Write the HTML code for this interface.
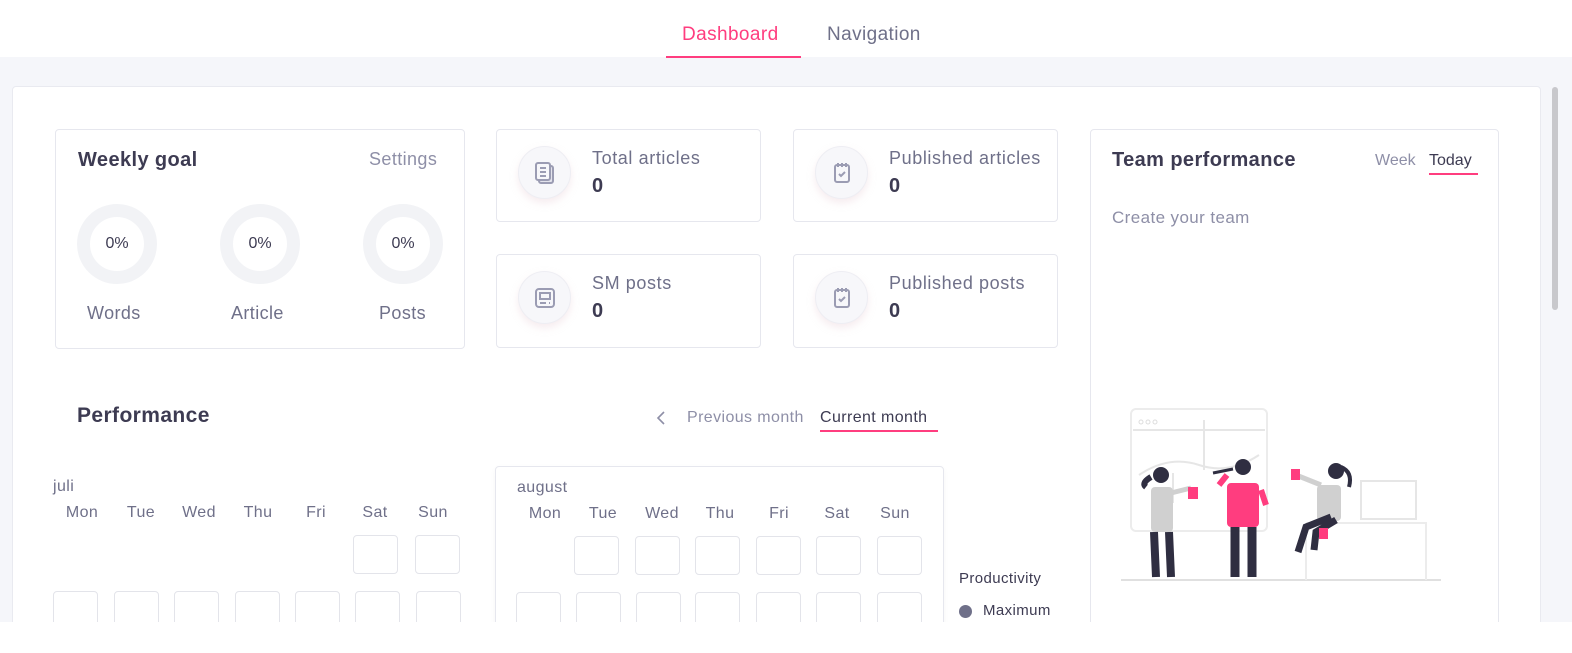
<!DOCTYPE html>
<html style="overflow:hidden"><head><meta charset="utf-8"><style>
*{box-sizing:border-box;margin:0;padding:0}
html,body{overflow:hidden}
body{width:1572px;height:653px;background:#fff;font-family:"Liberation Sans",sans-serif;position:relative;color:#3d3b52;letter-spacing:0.4px}
.abs{position:absolute}
.bg{left:0;top:57px;width:1572px;height:565px;background:#f5f6fa}
.main{left:12px;top:86px;width:1529px;height:560px;background:#fff;border:1px solid #e9eaf0;border-radius:4px}
.card{position:absolute;background:#fff;border:1px solid #e6e7ee;border-radius:4px}
.grey{color:#8e8fa7}
.donut{position:absolute;width:80px;height:80px;border-radius:50%;border:13px solid #f2f3f6;display:flex;align-items:center;justify-content:center;font-size:16px;color:#3d3b52;letter-spacing:0}
.ic{position:absolute;left:21px;top:16px;width:53px;height:53px;border-radius:50%;background:#f7f7fa;border:1px solid #eeeef3;box-shadow:0 4px 8px rgba(230,200,210,.35);display:flex;align-items:center;justify-content:center}
.lab{position:absolute;left:95px;top:18px;font-size:18px;color:#6f7089;letter-spacing:0.6px}
.num{position:absolute;left:95px;top:45px;font-size:20px;font-weight:bold;color:#3d3b52}
.dh{position:absolute;font-size:16px;color:#6f7089;transform:translateX(-50%)}
.bx{position:absolute;width:45px;height:39px;border:1px solid #e3e4ea;border-radius:4px}
</style></head><body>
<div class="abs" style="left:682px;top:24px;font-size:19px;color:#ff3d7f">Dashboard</div>
<div class="abs" style="left:827px;top:24px;font-size:19px;color:#6f7089">Navigation</div>
<div class="abs bg"></div>
<div class="abs" style="left:666px;top:56px;width:135px;height:2px;background:#ff3d7f"></div>
<div class="abs main"></div>
<div class="abs" style="left:1552px;top:87px;width:6px;height:223px;background:#c8c8cc;border-radius:3px"></div>

<div class="card" style="left:55px;top:129px;width:410px;height:220px">
 <div class="abs" style="left:22px;top:19px;font-size:20px;font-weight:bold">Weekly goal</div>
 <div class="abs grey" style="left:313px;top:19px;font-size:18px">Settings</div>
 <div class="donut" style="left:21px;top:74px">0%</div>
 <div class="donut" style="left:164px;top:74px">0%</div>
 <div class="donut" style="left:307px;top:74px">0%</div>
 <div class="abs" style="left:31px;top:173px;font-size:18px;color:#6f7089">Words</div>
 <div class="abs" style="left:175px;top:173px;font-size:18px;color:#6f7089">Article</div>
 <div class="abs" style="left:323px;top:173px;font-size:18px;color:#6f7089">Posts</div>
</div>

<div class="card" style="left:496px;top:129px;width:265px;height:93px"><div class="ic"><svg width="22" height="24" viewBox="0 0 22 24" fill="none" stroke="#9b9cb3" stroke-width="2"><rect x="5" y="5" width="14" height="17" rx="2" fill="#e3e3ec"/><rect x="2" y="2" width="14" height="17" rx="2" fill="#f7f7fa"/><path d="M6 7h6M6 11h6M6 15h6"/></svg></div><div class="lab">Total articles</div><div class="num">0</div></div>
<div class="card" style="left:793px;top:129px;width:265px;height:93px"><div class="ic"><svg width="20" height="24" viewBox="0 0 20 24" fill="none" stroke="#9b9cb3" stroke-width="2"><rect x="3" y="4" width="14" height="17" rx="2"/><path d="M6 2v4M10 2v4M14 2v4M7 13l2 2 4-4"/></svg></div><div class="lab">Published articles</div><div class="num">0</div></div>
<div class="card" style="left:496px;top:254px;width:265px;height:94px"><div class="ic"><svg width="22" height="22" viewBox="0 0 22 22" fill="none" stroke="#9b9cb3" stroke-width="2"><rect x="2" y="2" width="18" height="18" rx="3"/><rect x="6" y="6" width="10" height="6"/><path d="M6 16h6M15 16h1"/></svg></div><div class="lab">SM posts</div><div class="num">0</div></div>
<div class="card" style="left:793px;top:254px;width:265px;height:94px"><div class="ic"><svg width="20" height="24" viewBox="0 0 20 24" fill="none" stroke="#9b9cb3" stroke-width="2"><rect x="3" y="4" width="14" height="17" rx="2"/><path d="M6 2v4M10 2v4M14 2v4M7 13l2 2 4-4"/></svg></div><div class="lab">Published posts</div><div class="num">0</div></div>

<div class="card" style="left:1090px;top:129px;width:409px;height:520px">
 <div class="abs" style="left:21px;top:19px;font-size:20px;font-weight:bold">Team performance</div>
 <div class="abs grey" style="left:284px;top:22px;font-size:16px;letter-spacing:0">Week</div>
 <div class="abs" style="left:338px;top:22px;font-size:16px;color:#3d3b52;letter-spacing:0">Today</div>
 <div class="abs" style="left:338px;top:43px;width:49px;height:2px;background:#ff3d7f"></div>
 <div class="abs grey" style="left:21px;top:78px;font-size:17px">Create your team</div>
 <svg class="abs" style="left:30px;top:275px" width="330" height="180" viewBox="0 0 330 180">
  <rect x="10" y="4" width="136" height="122" rx="5" fill="none" stroke="#ececec" stroke-width="2"/>
  <circle cx="20" cy="17" r="2" fill="none" stroke="#ddd"/><circle cx="27" cy="17" r="2" fill="none" stroke="#ddd"/><circle cx="34" cy="17" r="2" fill="none" stroke="#ddd"/>
  <path d="M12 25h132M18 70q30-20 60-10t60-10M83 65v-50M52 68v30" stroke="#e6e6e6" fill="none" stroke-width="2"/>
  <path d="M0 175h320" stroke="#e0e0e0" stroke-width="2"/>
  <rect x="240" y="76" width="55" height="38" fill="none" stroke="#e6e6e6" stroke-width="2"/>
  <path d="M185 118h120v57M185 118v57" fill="none" stroke="#ececec" stroke-width="2"/>
  <path d="M30 72q-10 6-5 10" stroke="#2f2e41" stroke-width="6" fill="none"/>
  <rect x="30" y="82" width="22" height="45" rx="4" fill="#d0d0d0"/><path d="M50 88l20-5" stroke="#d0d0d0" stroke-width="5"/>
  <path d="M33 127l2 45M48 127l2 45" stroke="#2f2e41" stroke-width="8"/>
  <circle cx="40" cy="70" r="8" fill="#2f2e41"/>
  <path d="M98 80l8-10M140 85l5 15" stroke="#ff3d7f" stroke-width="6"/>
  <rect x="106" y="78" width="32" height="44" rx="4" fill="#ff3d7f"/><path d="M114 122v50M131 122v50" stroke="#2f2e41" stroke-width="9"/>
  <circle cx="122" cy="62" r="8" fill="#2f2e41"/><path d="M92 68l20-4" stroke="#2f2e41" stroke-width="3"/>
  <rect x="196" y="80" width="24" height="36" rx="4" fill="#d0d0d0"/><path d="M200 80l-25-10" stroke="#d0d0d0" stroke-width="5"/>
  <path d="M210 112l-25 10 -8 25M215 115l-20 12 -2 18" stroke="#2f2e41" stroke-width="7" fill="none"/>
  <circle cx="215" cy="66" r="8" fill="#2f2e41"/><path d="M220 62q12 5 8 20" stroke="#2f2e41" stroke-width="4" fill="none"/>
  <rect x="67" y="82" width="10" height="12" fill="#ff3d7f"/><rect x="170" y="64" width="9" height="11" fill="#ff3d7f"/><rect x="198" y="123" width="9" height="11" fill="#ff3d7f"/>
 </svg>
</div>

<div class="abs" style="left:77px;top:404px;font-size:21px;font-weight:bold">Performance</div>
<svg class="abs" style="left:655px;top:410px" width="12" height="16"><path d="M9 2L3 8l6 6" stroke="#8e8fa7" stroke-width="1.6" fill="none"/></svg>
<div class="abs grey" style="left:687px;top:409px;font-size:16px">Previous month</div>
<div class="abs" style="left:820px;top:409px;font-size:16px;color:#3d3b52">Current month</div>
<div class="abs" style="left:820px;top:430px;width:118px;height:2px;background:#ff3d7f"></div>

<div class="abs" style="left:53px;top:478px;font-size:16px;color:#6f7089">juli</div>
<div class="dh" style="left:82px;top:504px">Mon</div><div class="dh" style="left:141px;top:504px">Tue</div><div class="dh" style="left:199px;top:504px">Wed</div><div class="dh" style="left:258px;top:504px">Thu</div><div class="dh" style="left:316px;top:504px">Fri</div><div class="dh" style="left:375px;top:504px">Sat</div><div class="dh" style="left:433px;top:504px">Sun</div>
<div class="bx" style="left:353px;top:535px"></div><div class="bx" style="left:415px;top:535px"></div>
<div class="bx" style="left:53px;top:591px"></div><div class="bx" style="left:114px;top:591px"></div><div class="bx" style="left:174px;top:591px"></div><div class="bx" style="left:235px;top:591px"></div><div class="bx" style="left:295px;top:591px"></div><div class="bx" style="left:355px;top:591px"></div><div class="bx" style="left:416px;top:591px"></div>

<div class="card" style="left:495px;top:466px;width:449px;height:180px;box-shadow:0 2px 6px rgba(0,0,0,.04)">
 <div class="abs" style="left:21px;top:12px;font-size:16px;color:#6f7089">august</div>
</div>
<div class="dh" style="left:545px;top:505px">Mon</div><div class="dh" style="left:603px;top:505px">Tue</div><div class="dh" style="left:662px;top:505px">Wed</div><div class="dh" style="left:720px;top:505px">Thu</div><div class="dh" style="left:779px;top:505px">Fri</div><div class="dh" style="left:837px;top:505px">Sat</div><div class="dh" style="left:895px;top:505px">Sun</div>
<div class="bx" style="left:574px;top:536px"></div><div class="bx" style="left:635px;top:536px"></div><div class="bx" style="left:695px;top:536px"></div><div class="bx" style="left:756px;top:536px"></div><div class="bx" style="left:816px;top:536px"></div><div class="bx" style="left:877px;top:536px"></div>
<div class="bx" style="left:516px;top:592px"></div><div class="bx" style="left:576px;top:592px"></div><div class="bx" style="left:636px;top:592px"></div><div class="bx" style="left:695px;top:592px"></div><div class="bx" style="left:756px;top:592px"></div><div class="bx" style="left:816px;top:592px"></div><div class="bx" style="left:877px;top:592px"></div>

<div class="abs" style="left:959px;top:570px;font-size:15px;color:#3d3b52">Productivity</div>
<div class="abs" style="left:959px;top:605px;width:13px;height:13px;border-radius:50%;background:#6f7089"></div>
<div class="abs" style="left:983px;top:602px;font-size:15px;color:#3d3b52">Maximum</div>
<div class="abs" style="left:0;top:622px;width:1572px;height:31px;background:#fff"></div>
</body></html>
